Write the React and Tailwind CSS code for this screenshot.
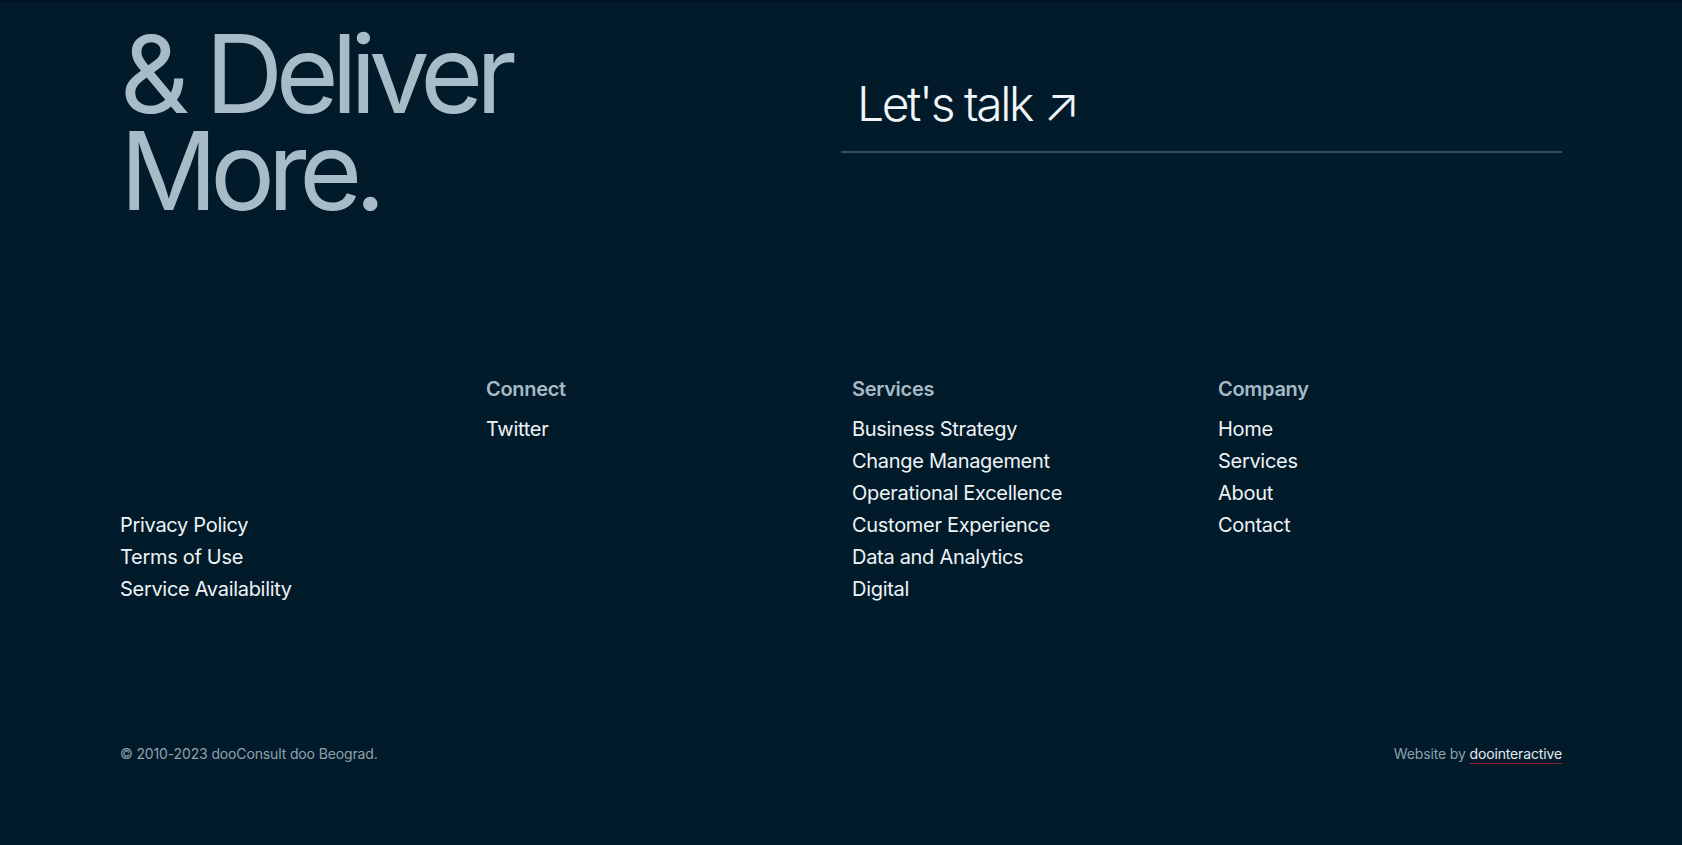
const columns = [
  { title: 'Connect', links: ['Twitter'] },
  {
    title: 'Services',
    links: [
      'Business Strategy',
      'Change Management',
      'Operational Excellence',
      'Customer Experience',
      'Data and Analytics',
      'Digital',
    ],
  },
  { title: 'Company', links: ['Home', 'Services', 'About', 'Contact'] },
]

const legal = ['Privacy Policy', 'Terms of Use', 'Service Availability']

const App = () => {
  return (
    <div
      className="min-h-screen bg-[#021b2a] border-t-2 border-[#011520] text-[#eef3f6]"
      style={{ fontFamily: 'Inter, "Noto Sans", sans-serif' }}
    >
      <div className="px-[120px] pt-[23px] pb-20">
        {/* headline + contact link */}
        <div className="grid grid-cols-2">
          <h2 className="text-[108px] leading-[97px] font-normal tracking-[-0.068em] text-[#a7bcc7]">
            & Deliver
            <br />
            More.
          </h2>
          <div className="mt-[55px]">
            <a href="#" className="block px-4 pb-[23px] border-b-2 border-[#34505f] text-5xl leading-none font-light tracking-[-0.05em] text-[#f2f6f8]">
              Let's talk <span className="tracking-normal">↗</span>
            </a>
          </div>
        </div>

        {/* link columns */}
        <div className="mt-[154px] grid grid-cols-4 gap-x-[22px] text-xl leading-8 tracking-[-0.015em]">
          <ul className="self-end">
            {legal.map((item) => (
              <li key={item}>
                <a href="#">{item}</a>
              </li>
            ))}
          </ul>
          {columns.map((col) => (
            <div key={col.title}>
              <h3 className="mb-2 font-semibold text-[#a6bac5]">{col.title}</h3>
              <ul>
                {col.links.map((link) => (
                  <li key={link}>
                    <a href="#">{link}</a>
                  </li>
                ))}
              </ul>
            </div>
          ))}
        </div>

        {/* bottom bar */}
        <div className="mt-[139px] flex items-center justify-between text-sm tracking-[-0.01em] text-[#8fa2ad]">
          <p>© 2010-2023 dooConsult doo Beograd.</p>
          <p>
            Website by{' '}
            <a href="#" className="text-[#e4ebef] underline decoration-[#8a2632] underline-offset-4">
              doointeractive
            </a>
          </p>
        </div>
      </div>
    </div>
  )
}

export default App
